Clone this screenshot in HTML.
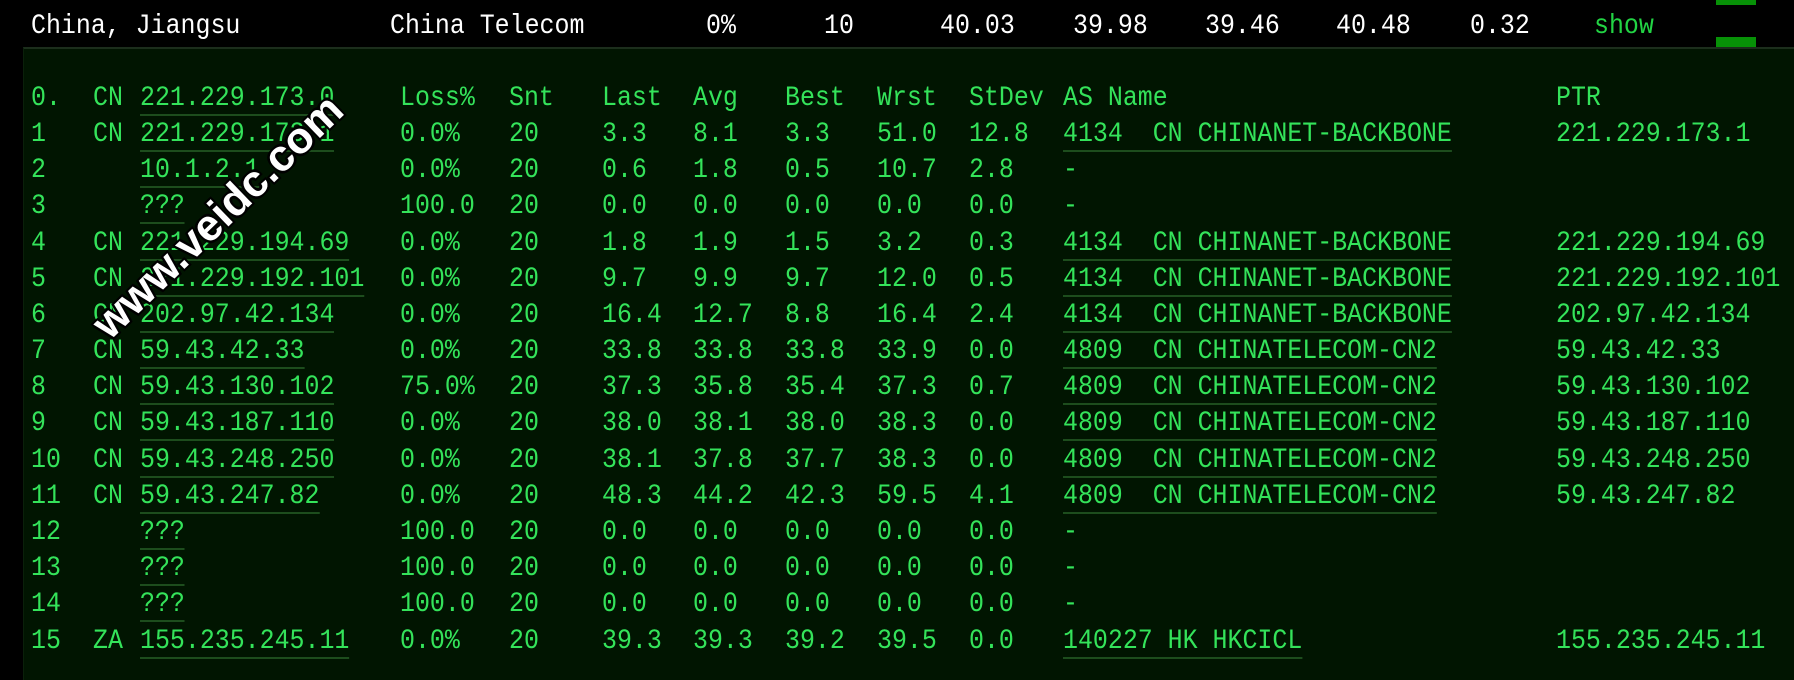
<!DOCTYPE html>
<html><head><meta charset="utf-8"><style>
body{margin:0;width:1794px;height:680px;background:#000;overflow:hidden;position:relative;font-family:"Liberation Mono",monospace;}
.h{position:absolute;top:12px;color:#fff;font-size:28px;line-height:30px;white-space:pre;transform:scaleX(0.89);transform-origin:0 0}
.bar{position:absolute;left:1716px;width:40px;background:#079107}
#panel{position:absolute;left:23px;top:47px;right:0;bottom:0;background:#011501;border-top:2px solid #1c2e1c;border-left:1px solid #0a200a}
.r{position:absolute;left:0;height:30px;width:1794px}
.r span{position:absolute;top:0;color:#34e35a;font-size:28px;line-height:30px;white-space:pre;transform:scaleX(0.89);transform-origin:0 0}
.u{border-bottom:2px solid #1d4d1d;}
#wm{position:absolute;left:218px;top:217px;transform:translate(-50%,-50%) rotate(-44deg);font-family:"Liberation Sans",sans-serif;font-weight:bold;font-size:44px;color:#fff;white-space:nowrap;text-shadow:-2px -2px 0 #000,2px -2px 0 #000,-2px 2px 0 #000,2px 2px 0 #000,0 2px 0 #000,0 -2px 0 #000,2px 0 0 #000,-2px 0 0 #000}
#rows{position:absolute;left:0;top:2px}
</style></head><body>
<div class="h" style="left:31px">China, Jiangsu</div>
<div class="h" style="left:390px">China Telecom</div>
<div class="h" style="left:706px">0%</div>
<div class="h" style="left:824px">10</div>
<div class="h" style="left:940px">40.03</div>
<div class="h" style="left:1073px">39.98</div>
<div class="h" style="left:1205px">39.46</div>
<div class="h" style="left:1336px">40.48</div>
<div class="h" style="left:1470px">0.32</div>
<div class="h" style="left:1594px;color:#22d444">show</div>
<div class="bar" style="top:0;height:5px"></div>
<div class="bar" style="top:37px;height:10px"></div>
<div id="panel"></div>
<div id="rows">
<div class="r" style="top:82px"><span style="left:31px">0.</span><span style="left:93px">CN</span><span class="u" style="left:140px">221.229.173.0</span><span style="left:400px">Loss%</span><span style="left:509px">Snt</span><span style="left:602px">Last</span><span style="left:693px">Avg</span><span style="left:785px">Best</span><span style="left:877px">Wrst</span><span style="left:969px">StDev</span><span style="left:1063px">AS Name</span><span style="left:1556px">PTR</span></div>
<div class="r" style="top:118px"><span style="left:31px">1</span><span style="left:93px">CN</span><span class="u" style="left:140px">221.229.173.1</span><span style="left:400px">0.0%</span><span style="left:509px">20</span><span style="left:602px">3.3</span><span style="left:693px">8.1</span><span style="left:785px">3.3</span><span style="left:877px">51.0</span><span style="left:969px">12.8</span><span class="u" style="left:1063px">4134  CN CHINANET-BACKBONE</span><span style="left:1556px">221.229.173.1</span></div>
<div class="r" style="top:154px"><span style="left:31px">2</span><span class="u" style="left:140px">10.1.2.1</span><span style="left:400px">0.0%</span><span style="left:509px">20</span><span style="left:602px">0.6</span><span style="left:693px">1.8</span><span style="left:785px">0.5</span><span style="left:877px">10.7</span><span style="left:969px">2.8</span><span style="left:1063px">-</span></div>
<div class="r" style="top:190px"><span style="left:31px">3</span><span class="u" style="left:140px">???</span><span style="left:400px">100.0</span><span style="left:509px">20</span><span style="left:602px">0.0</span><span style="left:693px">0.0</span><span style="left:785px">0.0</span><span style="left:877px">0.0</span><span style="left:969px">0.0</span><span style="left:1063px">-</span></div>
<div class="r" style="top:227px"><span style="left:31px">4</span><span style="left:93px">CN</span><span class="u" style="left:140px">221.229.194.69</span><span style="left:400px">0.0%</span><span style="left:509px">20</span><span style="left:602px">1.8</span><span style="left:693px">1.9</span><span style="left:785px">1.5</span><span style="left:877px">3.2</span><span style="left:969px">0.3</span><span class="u" style="left:1063px">4134  CN CHINANET-BACKBONE</span><span style="left:1556px">221.229.194.69</span></div>
<div class="r" style="top:263px"><span style="left:31px">5</span><span style="left:93px">CN</span><span class="u" style="left:140px">221.229.192.101</span><span style="left:400px">0.0%</span><span style="left:509px">20</span><span style="left:602px">9.7</span><span style="left:693px">9.9</span><span style="left:785px">9.7</span><span style="left:877px">12.0</span><span style="left:969px">0.5</span><span class="u" style="left:1063px">4134  CN CHINANET-BACKBONE</span><span style="left:1556px">221.229.192.101</span></div>
<div class="r" style="top:299px"><span style="left:31px">6</span><span style="left:93px">CN</span><span class="u" style="left:140px">202.97.42.134</span><span style="left:400px">0.0%</span><span style="left:509px">20</span><span style="left:602px">16.4</span><span style="left:693px">12.7</span><span style="left:785px">8.8</span><span style="left:877px">16.4</span><span style="left:969px">2.4</span><span class="u" style="left:1063px">4134  CN CHINANET-BACKBONE</span><span style="left:1556px">202.97.42.134</span></div>
<div class="r" style="top:335px"><span style="left:31px">7</span><span style="left:93px">CN</span><span class="u" style="left:140px">59.43.42.33</span><span style="left:400px">0.0%</span><span style="left:509px">20</span><span style="left:602px">33.8</span><span style="left:693px">33.8</span><span style="left:785px">33.8</span><span style="left:877px">33.9</span><span style="left:969px">0.0</span><span class="u" style="left:1063px">4809  CN CHINATELECOM-CN2</span><span style="left:1556px">59.43.42.33</span></div>
<div class="r" style="top:371px"><span style="left:31px">8</span><span style="left:93px">CN</span><span class="u" style="left:140px">59.43.130.102</span><span style="left:400px">75.0%</span><span style="left:509px">20</span><span style="left:602px">37.3</span><span style="left:693px">35.8</span><span style="left:785px">35.4</span><span style="left:877px">37.3</span><span style="left:969px">0.7</span><span class="u" style="left:1063px">4809  CN CHINATELECOM-CN2</span><span style="left:1556px">59.43.130.102</span></div>
<div class="r" style="top:407px"><span style="left:31px">9</span><span style="left:93px">CN</span><span class="u" style="left:140px">59.43.187.110</span><span style="left:400px">0.0%</span><span style="left:509px">20</span><span style="left:602px">38.0</span><span style="left:693px">38.1</span><span style="left:785px">38.0</span><span style="left:877px">38.3</span><span style="left:969px">0.0</span><span class="u" style="left:1063px">4809  CN CHINATELECOM-CN2</span><span style="left:1556px">59.43.187.110</span></div>
<div class="r" style="top:444px"><span style="left:31px">10</span><span style="left:93px">CN</span><span class="u" style="left:140px">59.43.248.250</span><span style="left:400px">0.0%</span><span style="left:509px">20</span><span style="left:602px">38.1</span><span style="left:693px">37.8</span><span style="left:785px">37.7</span><span style="left:877px">38.3</span><span style="left:969px">0.0</span><span class="u" style="left:1063px">4809  CN CHINATELECOM-CN2</span><span style="left:1556px">59.43.248.250</span></div>
<div class="r" style="top:480px"><span style="left:31px">11</span><span style="left:93px">CN</span><span class="u" style="left:140px">59.43.247.82</span><span style="left:400px">0.0%</span><span style="left:509px">20</span><span style="left:602px">48.3</span><span style="left:693px">44.2</span><span style="left:785px">42.3</span><span style="left:877px">59.5</span><span style="left:969px">4.1</span><span class="u" style="left:1063px">4809  CN CHINATELECOM-CN2</span><span style="left:1556px">59.43.247.82</span></div>
<div class="r" style="top:516px"><span style="left:31px">12</span><span class="u" style="left:140px">???</span><span style="left:400px">100.0</span><span style="left:509px">20</span><span style="left:602px">0.0</span><span style="left:693px">0.0</span><span style="left:785px">0.0</span><span style="left:877px">0.0</span><span style="left:969px">0.0</span><span style="left:1063px">-</span></div>
<div class="r" style="top:552px"><span style="left:31px">13</span><span class="u" style="left:140px">???</span><span style="left:400px">100.0</span><span style="left:509px">20</span><span style="left:602px">0.0</span><span style="left:693px">0.0</span><span style="left:785px">0.0</span><span style="left:877px">0.0</span><span style="left:969px">0.0</span><span style="left:1063px">-</span></div>
<div class="r" style="top:588px"><span style="left:31px">14</span><span class="u" style="left:140px">???</span><span style="left:400px">100.0</span><span style="left:509px">20</span><span style="left:602px">0.0</span><span style="left:693px">0.0</span><span style="left:785px">0.0</span><span style="left:877px">0.0</span><span style="left:969px">0.0</span><span style="left:1063px">-</span></div>
<div class="r" style="top:625px"><span style="left:31px">15</span><span style="left:93px">ZA</span><span class="u" style="left:140px">155.235.245.11</span><span style="left:400px">0.0%</span><span style="left:509px">20</span><span style="left:602px">39.3</span><span style="left:693px">39.3</span><span style="left:785px">39.2</span><span style="left:877px">39.5</span><span style="left:969px">0.0</span><span class="u" style="left:1063px">140227 HK HKCICL</span><span style="left:1556px">155.235.245.11</span></div>
</div>
<div id="wm">www.veidc.com</div>
</body></html>
